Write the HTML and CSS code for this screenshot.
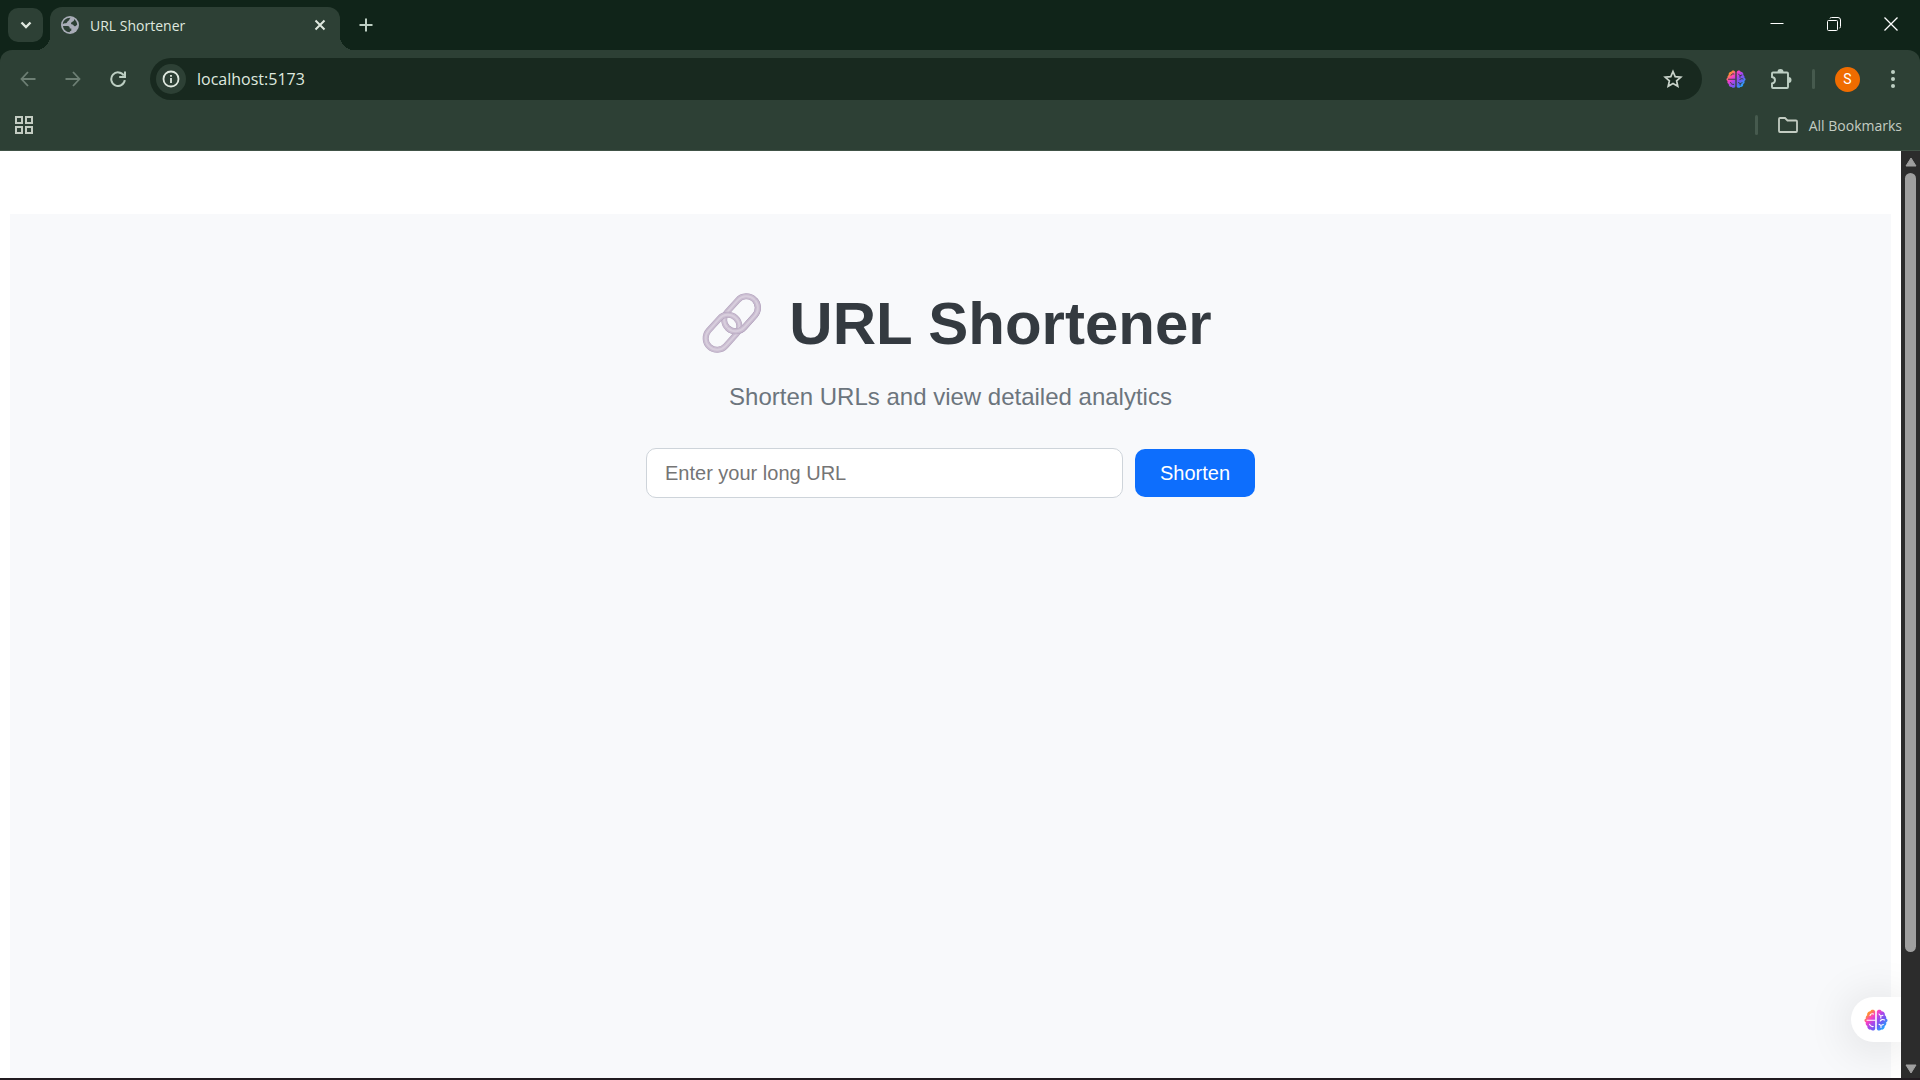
FILE: index.html
```html
<!DOCTYPE html>
<html lang="en">
<head>
<meta charset="utf-8">
<meta name="viewport" content="width=device-width, initial-scale=1">
<title>URL Shortener</title>
<link rel="stylesheet" href="styles.css">
</head>
<body>
<svg class="defs" width="0" height="0" aria-hidden="true">
  <defs>
    <linearGradient id="brain-fill" gradientUnits="userSpaceOnUse" x1="4" y1="3" x2="21" y2="20">
      <stop offset="0" stop-color="#ffa01f"/>
      <stop offset=".1" stop-color="#ff8a3a"/>
      <stop offset=".3" stop-color="#fb3fc4"/>
      <stop offset=".5" stop-color="#a947ea"/>
      <stop offset=".72" stop-color="#6a5cf3"/>
      <stop offset="1" stop-color="#1eb0ff"/>
    </linearGradient>
    <symbol id="brain" viewBox="0 0 24 24">
      <path fill="url(#brain-fill)" d="M11.2 3.6C10.6 1.3 7.300 1 6.400 3.200C4.200 3.200 2.700 5 3.200 7.200C1.800 8.200 1.500 9.600 1.900 10.600C0 11.500 0 13.500 1.900 14.300C1.300 16 2 17.400 3.300 18C3 20.500 5 22 6.800 21.600C8 23.300 10.800 22.800 11.200 20.700ZM12.800 3.600C13.400 1.300 16.700 1 17.600 3.200C19.800 3.200 21.300 5 20.800 7.200C22.200 8.200 22.500 9.600 22.100 10.600C24 11.500 24 13.500 22.100 14.300C22.700 16 22 17.400 20.700 18C21 20.500 19 22 17.200 21.600C16 23.300 13.200 22.800 12.800 20.700Z"/>
      <path fill="none" stroke="currentColor" stroke-width="1.1" stroke-linecap="round" d="M3 12.300H11M6 7.500C6.500 6 8 5.500 9.500 6M5.500 16.200C6 18 7.500 18.800 9.300 18.500M15 6L16.800 8L19 7.300M16.800 8V10M20.500 12C19 11 17 11.600 16.300 13M15 16.300L17 17.500L19.300 16.500M17 17.500V19.500"/>
    </symbol>
  </defs>
</svg>

<header class="browser">
  <div class="tab-strip">
    <button class="tab-search" aria-label="Search tabs">
      <svg width="12" height="12" viewBox="0 0 12 12"><path d="M1.500 3.500L6 8L10.500 3.500" fill="none" stroke="currentColor" stroke-width="2.400"/></svg>
    </button>
    <div class="tab">
      <svg class="favicon" width="18" height="18" viewBox="0 0 18 18"><circle cx="9" cy="9" r="9"/><path class="land" d="M9.500 1.800C8 3 9 4.300 7.200 5C6 5.400 6.500 6.500 5.500 7C4.500 7.500 3.200 7 1.800 8.200C1.900 5 4.800 1.700 9.500 1.800ZM2 10H6.500C8.500 10 8.800 11.300 8.700 12.500H10.300V14.700C9.300 15 8.800 15.500 8.600 16.300C5 16 2.400 13.500 2 10ZM13 3C15 4.300 16.200 6.500 16.200 9C15 9.300 14.600 10.600 13.500 10.300C12.300 10 12.700 8.800 11.500 8.600C9.800 8.400 9.600 7.200 10.600 6.300C11.600 5.500 13.400 5.400 13 3Z"/></svg>
      <span class="tab-title">URL Shortener</span>
      <button class="tab-close" aria-label="Close tab">
        <svg width="12" height="12" viewBox="0 0 12 12"><path d="M1.500 1.500L10.500 10.500M10.500 1.500L1.500 10.500" stroke="currentColor" stroke-width="2"/></svg>
      </button>
    </div>
    <button class="new-tab" aria-label="New tab">
      <svg width="14" height="14" viewBox="0 0 14 14"><path d="M7 .500V13.500M.500 7H13.500" stroke="currentColor" stroke-width="2"/></svg>
    </button>
    <div class="window-controls">
      <button aria-label="Minimize"><svg width="14" height="14" viewBox="0 0 14 14"><path d="M.500 6.500H13.500" stroke="currentColor"/></svg></button>
      <button aria-label="Restore"><svg width="14" height="14" viewBox="0 0 14 14" fill="none" stroke="currentColor"><rect x=".500" y="3.500" width="10" height="10" rx="1"/><path d="M3 1.500Q3 .500 4.500 .500H11Q13.500 .500 13.500 3V9.500Q13.500 11 12.500 11"/></svg></button>
      <button aria-label="Close"><svg width="14" height="14" viewBox="0 0 14 14"><path d="M.500 .500L13.500 13.500M13.500 .500L.500 13.500" stroke="currentColor" stroke-width="1.300"/></svg></button>
    </div>
  </div>

  <div class="toolbar">
    <button class="tool dim" aria-label="Back"><svg width="16" height="16" viewBox="0 0 16 16"><path d="M15.500 8H2M8 1L1.500 8L8 15" fill="none" stroke="currentColor" stroke-width="1.800"/></svg></button>
    <button class="tool dim" aria-label="Forward"><svg width="16" height="16" viewBox="0 0 16 16"><path d="M.500 8H14M8 1L14.500 8L8 15" fill="none" stroke="currentColor" stroke-width="1.800"/></svg></button>
    <button class="tool" aria-label="Reload"><svg width="16" height="16" viewBox="0 0 16 16"><path d="M13.800 4.500A6.800 6.800 0 1 0 14.800 9.200M15 .500V6H9.200" fill="none" stroke="currentColor" stroke-width="2"/></svg></button>
    <div class="omnibox">
      <button class="site-info" aria-label="View site information"><svg width="18" height="18" viewBox="0 0 18 18"><circle cx="9" cy="9" r="7.500" fill="none" stroke="currentColor" stroke-width="1.800"/><path d="M9 8V13M9 5V6.800" stroke="currentColor" stroke-width="1.800"/></svg></button>
      <input class="address" type="text" value="localhost:5173" aria-label="Address">
      <button class="bookmark" aria-label="Bookmark this tab"><svg width="20" height="20" viewBox="0 0 20 20"><path d="M10 2.500L12.200 7.600L17.800 8.100L13.600 11.800L14.800 17.200L10 14.400L5.200 17.200L6.400 11.800L2.200 8.100L7.800 7.600Z" fill="none" stroke="currentColor" stroke-width="1.700"/></svg></button>
    </div>
    <button class="tool brain-tool" aria-label="Assistant extension"><svg width="20" height="20"><use href="#brain"/></svg></button>
    <button class="tool" aria-label="Extensions"><svg width="22" height="22" viewBox="0 0 22 22"><path d="M4 4.500H17Q18 4.500 18 5.500V19Q18 20 17 20H3Q2 20 2 19V15.500Q5 15 5 12.300Q5 9.500 2 9V5.500Q2 4.500 3 4.500Z" fill="none" stroke="currentColor" stroke-width="1.900"/><path d="M7.500 4A3 3 0 0 1 13.500 4ZM18.500 9A3 3 0 0 1 18.500 15Z" fill="currentColor"/></svg></button>
    <span class="divider"></span>
    <button class="tool" aria-label="Profile"><span class="avatar">S</span></button>
    <button class="tool" aria-label="Menu"><svg width="4" height="18" viewBox="0 0 4 18" fill="currentColor"><circle cx="2" cy="2" r="2"/><circle cx="2" cy="9" r="2"/><circle cx="2" cy="16" r="2"/></svg></button>
  </div>

  <div class="bookmarks">
    <button class="apps" aria-label="Apps"><svg width="18" height="18" viewBox="0 0 18 18" fill="none" stroke="currentColor" stroke-width="2"><path d="M1 1H7V7H1ZM11 1H17V7H11ZM1 11H7V17H1ZM11 11H17V17H11Z"/></svg></button>
    <span class="divider"></span>
    <button class="all-bookmarks">
      <svg width="20" height="16" viewBox="0 0 20 16"><path d="M1 2Q1 1 2 1H7L9.500 3.500H18Q19 3.500 19 4.500V14Q19 15 18 15H2Q1 15 1 14Z" fill="none" stroke="currentColor" stroke-width="1.800"/></svg>
      All Bookmarks
    </button>
  </div>
</header>

<div class="viewport">
  <div class="page">
    <main class="shortener">
      <h1>
        <svg class="link-icon" width="82" height="64" viewBox="0 0 82 64" aria-hidden="true" fill="none">
          <defs>
            <clipPath id="lower-half"><path d="M10 64.400L74.400 0H82V64H10Z"/></clipPath>
            <g id="ring">
              <rect class="ring-edge" x="-19.500" y="-11.500" width="39" height="23" rx="11.500"/>
              <rect class="ring-body" x="-19.500" y="-11.500" width="39" height="23" rx="11.500"/>
              <rect class="ring-shine" x="-19.500" y="-11.500" width="39" height="23" rx="11.500"/>
            </g>
          </defs>
          <use href="#ring" transform="translate(52 21.800) rotate(-48)"/>
          <use href="#ring" transform="translate(33.500 40.300) rotate(-48)"/>
          <g clip-path="url(#lower-half)"><use href="#ring" transform="translate(52 21.800) rotate(-48)"/></g>
        </svg>
        URL Shortener
      </h1>
      <p class="tagline">Shorten URLs and view detailed analytics</p>
      <form class="shorten-form">
        <input type="text" placeholder="Enter your long URL" aria-label="Long URL">
        <button type="button">Shorten</button>
      </form>
    </main>
    <button class="assistant" aria-label="Open assistant"><svg width="24" height="24"><use href="#brain"/></svg></button>
  </div>
  <div class="scrollbar" aria-hidden="true">
    <svg width="12" height="10" viewBox="0 0 12 10"><path d="M6 1L11 9H1Z"/></svg>
    <span class="track"><span class="thumb"></span></span>
    <svg width="12" height="10" viewBox="0 0 12 10"><path d="M1 1H11L6 9Z"/></svg>
  </div>
</div>
</body>
</html>
```
FILE: styles.css
```css
* {
  box-sizing: border-box;
}

body {
  margin: 0;
  height: 100vh;
  display: flex;
  flex-direction: column;
  overflow: hidden;
  border-bottom: 2px solid #211b20;
  background: #ffffff;
  font-family: "Liberation Sans", Arial, sans-serif;
}

button {
  display: flex;
  align-items: center;
  justify-content: center;
  padding: 0;
  border: 0;
  background: none;
  color: inherit;
  font: inherit;
}

svg {
  display: block;
  flex: none;
}

.defs {
  position: absolute;
}

/* Browser chrome */
.browser {
  flex: none;
  background: #102419;
  color: #bdcfc3;
  font-family: "Open Sans", "Noto Sans", sans-serif;
  font-size: 14px;
}

.tab-strip {
  display: flex;
  align-items: flex-start;
  height: 50px;
  padding-left: 8px;
}

.tab-search {
  width: 35px;
  height: 34px;
  margin-top: 8px;
  border-radius: 10px;
  background: #2d4035;
  color: #dfe8df;
}

.tab {
  position: relative;
  display: flex;
  align-items: center;
  width: 290px;
  height: 43px;
  margin: 7px 0 0 7px;
  padding: 0 14px 7px 11px;
  border-radius: 12px 12px 0 0;
  background: #2d4035;
  color: #dfe8df;
}

.tab::before,
.tab::after {
  content: "";
  position: absolute;
  bottom: 0;
  width: 14px;
  height: 14px;
}

.tab::before {
  right: 100%;
  background: radial-gradient(circle at 0 0, transparent 14px, #2d4035 14px);
}

.tab::after {
  left: 100%;
  background: radial-gradient(circle at 100% 0, transparent 14px, #2d4035 14px);
}

.favicon {
  fill: #a9adb8;
}

.favicon .land {
  fill: #2d4035;
}

.tab-title {
  flex: 1;
  margin-left: 11px;
}

.new-tab {
  width: 34px;
  height: 34px;
  margin: 8px 0 0 9px;
}

.window-controls {
  display: flex;
  margin-left: auto;
  padding-right: 1px;
  color: #ffffff;
}

.window-controls button {
  width: 57px;
  height: 48px;
}

.toolbar {
  display: flex;
  align-items: center;
  height: 58px;
  padding: 0 5px;
  border-radius: 12px 12px 0 0;
  background: #2d4035;
}

.tool {
  flex: none;
  width: 45px;
  height: 42px;
}

.dim {
  color: #6d7f74;
}

.omnibox {
  flex: 1;
  display: flex;
  align-items: center;
  height: 42px;
  margin: 0 11px 0 10px;
  padding: 0 19px 0 6px;
  border-radius: 21px;
  background: #18291f;
  color: #dfe8df;
}

.site-info {
  width: 30px;
  height: 30px;
  border-radius: 15px;
  background: #2d4035;
}

.address {
  flex: 1;
  min-width: 0;
  margin-left: 11px;
  padding: 0;
  border: 0;
  outline: 0;
  background: none;
  color: #dfe8df;
  font: 16px "Open Sans", "Noto Sans", sans-serif;
}

.bookmark {
  color: #c9d3ca;
}

.brain-tool {
  color: #2d4035;
}

.divider {
  width: 3px;
  height: 20px;
  margin: 0 10px 0 9px;
  border-radius: 2px;
  background: #465a4e;
}

.avatar {
  width: 25px;
  height: 25px;
  border-radius: 50%;
  background: #f06c00;
  color: #ffffff;
  font: 14px/25px Roboto, sans-serif;
}

.bookmarks {
  display: flex;
  align-items: center;
  height: 43px;
  padding: 0 18px 8px 15px;
  border-bottom: 1px solid #405246;
  background: #2d4035;
  color: #c3ccc2;
}

.bookmarks .divider {
  margin: 0 20px 0 auto;
}

.all-bookmarks {
  gap: 11px;
}

/* Page shown in the browser */
.viewport {
  flex: 1;
  min-height: 0;
  display: flex;
}

.page {
  position: relative;
  flex: 1;
  display: flex;
  overflow: hidden;
  padding: 63px 10px 0;
}

.shortener {
  flex: 1;
  padding-top: 76px;
  background: #f8f9fb;
  text-align: center;
}

h1 {
  display: flex;
  align-items: center;
  justify-content: center;
  gap: 18px;
  margin: 0;
  color: #343a40;
  font-size: 60px;
  line-height: 68px;
}

.ring-edge {
  stroke: #b3a3bd;
  stroke-width: 6;
}

.ring-body {
  stroke: #c9bcd0;
  stroke-width: 5;
}

.ring-shine {
  stroke: #d8cedd;
  stroke-width: 2;
}

.tagline {
  margin: 25px 0 0;
  color: #6c757d;
  font-size: 24px;
  line-height: 28px;
}

.shorten-form {
  display: flex;
  align-items: center;
  gap: 12px;
  max-width: 609px;
  margin: 37px auto 0;
}

.shorten-form input {
  flex: 1;
  min-width: 0;
  height: 50px;
  padding: 0 18px;
  border: 1px solid #ced4da;
  border-radius: 10px;
  background: #ffffff;
  font: 20px "Liberation Sans", Arial, sans-serif;
}

.shorten-form input::placeholder {
  color: #757575;
}

.shorten-form button {
  width: 120px;
  height: 48px;
  border-radius: 10px;
  background: #0d6efd;
  color: #ffffff;
  font-size: 20px;
}

.assistant {
  position: absolute;
  right: 0;
  bottom: 36px;
  width: 50px;
  height: 45px;
  border-radius: 23px 0 0 23px;
  background: #ffffff;
  box-shadow: 0 4px 48px rgba(0, 0, 0, 0.14);
  color: #ffffff;
}

.scrollbar {
  flex: none;
  display: flex;
  flex-direction: column;
  align-items: center;
  gap: 6px;
  width: 19px;
  padding: 6px 0 4px;
  background: #2c2c2c;
}

.scrollbar svg {
  fill: #9f9f9f;
  stroke: #9f9f9f;
  stroke-linejoin: round;
}

.track {
  flex: 1;
  width: 11px;
}

.thumb {
  display: block;
  height: 88%;
  border-radius: 6px;
  background: #9f9f9f;
}
```
